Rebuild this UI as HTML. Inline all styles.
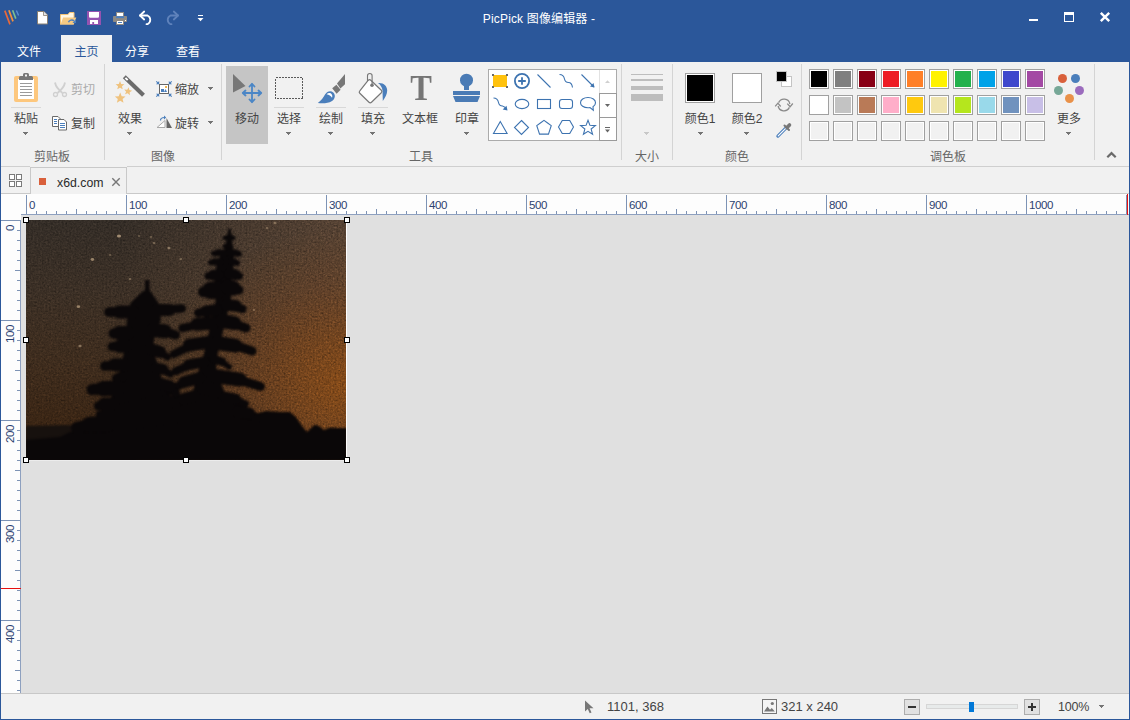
<!DOCTYPE html>
<html lang="zh-CN">
<head>
<meta charset="utf-8">
<title>PicPick 图像编辑器</title>
<style>
*{box-sizing:border-box;margin:0;padding:0}
html,body{width:1130px;height:720px;overflow:hidden;background:#e0e0e0}
body{font-family:"Liberation Sans","Noto Sans CJK SC",sans-serif;font-size:12px;color:#444;position:relative}
#app,#app *{position:absolute}
#app svg *{position:static}
#app{left:0;top:0;width:1130px;height:720px;overflow:hidden;background:#e0e0e0}
#titlebar{left:0;top:0;width:1130px;height:62px;background:#2b579a}
#title{left:439px;top:10px;letter-spacing:0.150px;width:200px;text-align:center;color:#fff;font-size:12px;line-height:18px;white-space:nowrap}
.tab{top:35px;height:27px;line-height:35px;color:#fff;font-size:12px;text-align:center;white-space:nowrap}
.tab.on{background:#f1f1f1;color:#2b579a}
#ribbon{left:1px;top:62px;width:1128px;height:105px;background:#f1f1f1;border-bottom:1px solid #d4d4d4}
.sep{top:64px;width:1px;height:96px;background:#d4d4d4}
.glabel{top:149px;height:16px;line-height:16px;font-size:12px;color:#666;text-align:center;white-space:nowrap}
.blabel{height:16px;line-height:16px;font-size:12px;color:#444;text-align:center;white-space:nowrap}
.blabel.dis{color:#aaa}
.arrow{width:5px;height:3px;background:linear-gradient(#747474,#747474) 0 0/5px 1px no-repeat,linear-gradient(#747474,#747474) 1px 1px/3px 1px no-repeat,linear-gradient(#747474,#747474) 2px 2px/1px 1px no-repeat}
.arrow.dis{background:linear-gradient(#c8c8c8,#c8c8c8) 0 0/5px 1px no-repeat,linear-gradient(#c8c8c8,#c8c8c8) 1px 1px/3px 1px no-repeat,linear-gradient(#c8c8c8,#c8c8c8) 2px 2px/1px 1px no-repeat}
.hline{height:1px;background:#d8d8d8}
#doctabs{left:1px;top:167px;width:1128px;height:27px;background:#f1f1f1}
#ruler-h{left:1px;top:194px;width:1128px;height:21px;background:#fdfdfd;border-bottom:1px solid #8ea0bf}
#ruler-v{left:1px;top:215px;width:20px;height:478px;background:#fdfdfd;border-right:1px solid #8ea0bf}
#status{left:1px;top:693px;width:1128px;height:26px;background:#f1f1f1;border-top:1px solid #c8c8c8}
.frame-l{left:0;top:0;width:1px;height:720px;background:#2b579a}
.frame-r{left:1129px;top:0;width:1px;height:720px;background:#2b579a}
.frame-b{left:0;top:719px;width:1130px;height:1px;background:#2b579a}
.sw{width:20px;height:20px;border:1px solid #a0a0a0;background:#f1f1f1}
.sw i{left:1px;top:1px;width:16px;height:16px;border:1px solid #fff;display:block}
.hd{width:6px;height:6px;background:#fff;border:1px solid #000}
.rl{letter-spacing:-0.400px;font-size:11.500px;color:#2c4270;line-height:12px;white-space:nowrap}
.rv{transform-origin:0 0;transform:rotate(-90deg) translate(-100%,0)}
.st{font-size:12px;color:#444;line-height:16px;white-space:nowrap}
</style>
</head>
<body>
<div id="app">
  <div id="titlebar">
    <svg style="left:0;top:0" width="230" height="35" viewBox="0 0 230 35">
      <!-- logo -->
      <g stroke-linecap="butt" fill="none">
        <line x1="4.8" y1="10.6" x2="10" y2="24.4" stroke="#e8693a" stroke-width="1.7"/>
        <line x1="8.9" y1="10.2" x2="13" y2="21.4" stroke="#f4913a" stroke-width="1.7"/>
        <line x1="12.6" y1="10.2" x2="15.8" y2="18.6" stroke="#7fc08e" stroke-width="1.6"/>
        <line x1="16.4" y1="10.4" x2="18.6" y2="15.6" stroke="#5a8fd0" stroke-width="1.4"/>
      </g>
      <!-- new -->
      <path d="M37.5 11.5h6.5l3.5 3.5v9h-10z" fill="#fff" stroke="#8a8073" stroke-width="1"/>
      <path d="M43.5 11.5v4h4" fill="#e6e6e6" stroke="#8a8073" stroke-width="0.8"/>
      <!-- open -->
      <path d="M60.500 24.500v-10h7.500l1.500-2h4.500v5" fill="#fff6e2" stroke="#f3c376" stroke-width="1"/>
      <path d="M60.500 24.800l2.600-7.300h13.200l-2.600 7.300z" fill="#f5c983"/>
      <path d="M68.500 22.300c0.800-2.300 3.600-3 5.600-1.500" fill="none" stroke="#4a7fc0" stroke-width="1.500"/>
      <path d="M76 19.200v3.800h-3.600z" fill="#4a7fc0"/>
      <!-- save -->
      <rect x="87" y="11" width="14" height="14" fill="#9553b0"/>
      <path d="M89 12h10v4.500a1.200 1.200 0 0 1-1.200 1.200h-7.600a1.200 1.200 0 0 1-1.200-1.200z" fill="#fff"/>
      <rect x="90" y="20" width="8" height="4" fill="#fff"/>
      <rect x="92.300" y="22" width="1.800" height="2" fill="#9553b0"/>
      <!-- print -->
      <rect x="113" y="16" width="14" height="6" rx="0.800" fill="#8e8a84"/>
      <rect x="116.500" y="12.500" width="7" height="4" fill="#fff" stroke="#8e8a84" stroke-width="1"/>
      <rect x="116" y="16.300" width="8" height="1.800" fill="#4a7fc0"/>
      <rect x="116.500" y="20.500" width="7" height="4" fill="#fff" stroke="#8e8a84" stroke-width="1"/>
      <rect x="118" y="22" width="4" height="1" fill="#4a7fc0"/>
      <rect x="125" y="20" width="1" height="1" fill="#fff"/>
      <!-- undo -->
      <path d="M140 15.500h7.500a4.800 4.800 0 0 1 0 8.700h-1" fill="none" stroke="#fff" stroke-width="1.800" stroke-linecap="round"/>
      <path d="M144.200 11.500l-4.200 4 4.200 4" fill="none" stroke="#fff" stroke-width="1.800" stroke-linecap="round" stroke-linejoin="round"/>
      <!-- redo -->
      <path d="M178 15.500h-7.500a4.800 4.800 0 0 0 0 8.700h1" fill="none" stroke="#5f82bb" stroke-width="1.800" stroke-linecap="round"/>
      <path d="M173.800 11.500l4.200 4-4.200 4" fill="none" stroke="#5f82bb" stroke-width="1.800" stroke-linecap="round" stroke-linejoin="round"/>
      <!-- dropdown -->
      <rect x="198" y="15" width="5" height="1" fill="#fff"/>
      <path d="M197.500 18h6l-3 3.200z" fill="#fff"/>
    </svg>
    <div id="title">PicPick 图像编辑器 -</div>
    <svg style="left:1020px;top:5px" width="100" height="24" viewBox="1020 5 100 24">
      <rect x="1029" y="19" width="9" height="2" fill="#fff"/>
      <rect x="1064.500" y="12.500" width="9" height="9" fill="none" stroke="#fff" stroke-width="1"/>
      <rect x="1064" y="12" width="10" height="3" fill="#fff"/>
      <path d="M1100.800 12.800l8.400 8.400M1109.200 12.800l-8.400 8.400" stroke="#fff" stroke-width="2.400" fill="none"/>
    </svg>
    <div class="tab" style="left:1px;width:56px">文件</div>
    <div class="tab on" style="left:61px;width:51px">主页</div>
    <div class="tab" style="left:112px;width:50px">分享</div>
    <div class="tab" style="left:163px;width:50px">查看</div>
  </div>
  <div id="ribbon"></div>
  <div id="rb">
    <div class="sep" style="left:104px"></div>
    <div class="sep" style="left:221px"></div>
    <div class="sep" style="left:621px"></div>
    <div class="sep" style="left:672px"></div>
    <div class="sep" style="left:801px"></div>
    <div class="sep" style="left:1094px"></div>
    <div style="left:226px;top:66px;width:42px;height:78px;background:#c5c5c5"></div>
    <div class="hline" style="left:11px;top:107px;width:30px"></div>
    <div class="hline" style="left:274px;top:107px;width:30px"></div>
    <div class="hline" style="left:316px;top:107px;width:30px"></div>
    <div class="hline" style="left:358px;top:107px;width:30px"></div>
    <div class="blabel" style="left:6px;top:111px;width:40px">粘贴</div>
    <div class="blabel dis" style="left:71px;top:82px;width:24px">剪切</div>
    <div class="blabel" style="left:71px;top:116px;width:24px">复制</div>
    <div class="blabel" style="left:110px;top:111px;width:40px">效果</div>
    <div class="blabel" style="left:175px;top:82px;width:24px">缩放</div>
    <div class="blabel" style="left:175px;top:116px;width:24px">旋转</div>
    <div class="blabel" style="left:227px;top:111px;width:40px">移动</div>
    <div class="blabel" style="left:269px;top:111px;width:40px">选择</div>
    <div class="blabel" style="left:311px;top:111px;width:40px">绘制</div>
    <div class="blabel" style="left:353px;top:111px;width:40px">填充</div>
    <div class="blabel" style="left:395px;top:111px;width:50px">文本框</div>
    <div class="blabel" style="left:447px;top:111px;width:40px">印章</div>
    <div class="blabel" style="left:680px;top:111px;width:40px">颜色1</div>
    <div class="blabel" style="left:727px;top:111px;width:40px">颜色2</div>
    <div class="blabel" style="left:1049px;top:111px;width:40px">更多</div>
    <div class="glabel" style="left:22px;width:60px">剪贴板</div>
    <div class="glabel" style="left:133px;width:60px">图像</div>
    <div class="glabel" style="left:391px;width:60px">工具</div>
    <div class="glabel" style="left:617px;width:60px">大小</div>
    <div class="glabel" style="left:707px;width:60px">颜色</div>
    <div class="glabel" style="left:918px;width:60px">调色板</div>
    <div class="arrow" style="left:23px;top:132px"></div>
    <div class="arrow" style="left:127px;top:132px"></div>
    <div class="arrow" style="left:208px;top:87px"></div>
    <div class="arrow" style="left:208px;top:121px"></div>
    <div class="arrow" style="left:286px;top:132px"></div>
    <div class="arrow" style="left:328px;top:132px"></div>
    <div class="arrow" style="left:370px;top:132px"></div>
    <div class="arrow" style="left:464px;top:132px"></div>
    <div class="arrow dis" style="left:644px;top:132px"></div>
    <div class="arrow" style="left:698px;top:132px"></div>
    <div class="arrow" style="left:744px;top:132px"></div>
    <div class="arrow" style="left:1066px;top:132px"></div>
    <div style="left:409px;top:68px;width:24px;height:40px;line-height:40px;font-family:'Liberation Serif',serif;font-size:36px;font-weight:bold;color:#767676;text-align:center;transform:scaleX(0.900);transform-origin:50% 50%">T</div>
  </div>
  <svg id="ico" style="left:0;top:62px" width="1130" height="104" viewBox="0 62 1130 104">
<g>
<rect x="14" y="76" width="24" height="26" rx="2" fill="#fdc77d"/>
<rect x="18" y="79" width="16" height="20" fill="#fff"/>
<path d="M19 80v-2.500a1.500 1.500 0 0 1 1.500-1.500h2.500v-1.500a1.500 1.500 0 0 1 1.500-1.500h3a1.500 1.500 0 0 1 1.500 1.500v1.500h2.500a1.500 1.500 0 0 1 1.500 1.500v2.500z" fill="#777"/>
<rect x="25" y="74.500" width="2" height="2" fill="#f4f4f4"/>
<g fill="#9a9a9a"><rect x="20" y="83" width="12" height="1"/><rect x="20" y="86" width="12" height="1"/><rect x="20" y="89" width="12" height="1"/><rect x="20" y="92" width="12" height="1"/><rect x="20" y="95" width="12" height="1"/></g>
</g>
<g fill="none" stroke="#d0d0d0" stroke-width="1.300">
<path d="M55 82.500c0.500 3 2.500 6.500 7.500 10.500M65 82.500c-0.500 3-2.500 6.500-7.500 10.500" stroke-width="1.800"/>
<circle cx="55.500" cy="94.500" r="2"/><circle cx="64.500" cy="94.500" r="2"/>
</g>
<g>
<path d="M52.500 116.500h5.500l2.500 2.500v7.500h-8z" fill="#fff" stroke="#6a6a6a"/>
<path d="M58.500 119.500h5.500l2.500 2.500v8h-8z" fill="#fff" stroke="#6a6a6a"/>
<g fill="#4a7ebb"><rect x="54" y="119" width="3" height="1"/><rect x="54" y="121" width="3" height="1"/><rect x="54" y="123" width="3" height="1"/>
<rect x="60" y="123" width="5" height="1"/><rect x="60" y="125" width="5" height="1"/><rect x="60" y="127" width="5" height="1"/></g>
</g>
<g>
<path d="M124.300 76.800l19.200 18.400" stroke="#6b6b6b" stroke-width="4.200" fill="none"/>
<path d="M125.400 77.900l2.300 2.200" stroke="#fff" stroke-width="2" fill="none"/>
<polygon points="120.00,81.00 121.22,83.93 124.37,84.18 121.97,86.24 122.70,89.32 120.00,87.67 117.30,89.32 118.03,86.24 115.63,84.18 118.78,83.93" fill="#efc27e"/>
<polygon points="128.73,87.26 129.36,90.09 132.16,90.82 129.67,92.29 129.84,95.17 127.67,93.26 124.98,94.32 126.13,91.66 124.29,89.43 127.17,89.70" fill="#efc27e"/>
<polygon points="120.20,92.60 121.68,96.16 125.53,96.47 122.60,98.98 123.49,102.73 120.20,100.72 116.91,102.73 117.80,98.98 114.87,96.47 118.72,96.16" fill="#efc27e"/>
</g>
<g>
<rect x="159.500" y="84.500" width="9" height="9" fill="#fff" stroke="#666"/>
<rect x="161" y="89" width="3" height="3" fill="#4a7ebb"/><path d="M164 92l1.500-3 1.500 3z" fill="#4a7ebb"/><rect x="165" y="86" width="2" height="2" fill="#f0b44e"/>
<g stroke="#4a7ebb" stroke-width="1.100" fill="none">
<path d="M156.300 81.300l2.400 2.400M171.700 81.300l-2.400 2.400M156.300 96.700l2.400-2.400M171.700 96.700l-2.400-2.400"/>
</g>
<g fill="#4a7ebb"><path d="M159.200 81v3.200h-3.200z"/><path d="M168.800 81v3.200h3.200z"/><path d="M159.200 97v-3.200h-3.200z"/><path d="M168.800 97v-3.200h3.200z"/></g>
</g>
<g>
<path d="M157 127.500h8v-7z" fill="#fff" stroke="#aaa" stroke-width="1"/>
<path d="M166.500 128v-10l5.500 10z" fill="#666"/>
<path d="M160.500 120.500c0-2 1.500-3 4-3" fill="none" stroke="#4a7ebb" stroke-width="1.200"/>
<path d="M164 115.500l2.200 2-2.200 2z" fill="#4a7ebb"/>
</g>
<g>
<path d="M233 74v18.500l12.500-6.500z" fill="#777"/>
<g fill="none" stroke="#4b86c6" stroke-width="1.800" stroke-linecap="round" stroke-linejoin="round">
<path d="M252 84.500v17M243.500 93h17"/>
<path d="M249.500 86.500l2.500-2.700 2.500 2.700M249.500 99.500l2.500 2.700 2.500-2.700M245.500 90.500l-2.700 2.500 2.700 2.500M258.500 90.500l2.700 2.500-2.700 2.500"/>
</g>
</g>
<rect x="275.500" y="77.500" width="27" height="21" fill="none" stroke="#5a5a5a" stroke-width="1" stroke-dasharray="2 1" shape-rendering="crispEdges"/>
<g>
<path d="M345 74l-8 9.600 3.400 5 4.600-4.400z" fill="#777"/>
<path d="M336.400 84.800l-4.200 3.500 4.400 5.400 4-4z" fill="#777"/>
<path d="M317.800 103c3.500-2.300 5.500-5.500 7.200-8.500 2-3.400 5.800-4.400 8.300-2 2.600 2.500 1.800 6.700-1.700 8.800-3.200 1.900-8.600 2.400-13.800 1.700z" fill="#4a7ebb"/>
<path d="M326.600 94.300c1.600-1.600 4-1.600 5.200 0.200 0.600 1 0.700 2.200 0.200 3.300-1-1.800-3-3-5.400-3.500z" fill="#fff"/>
</g>
<g>
<path d="M378 83c5.500-0.600 9.300 3 9.200 7.600-0.100 3.600-1.800 7-4.400 10.400l-0.300-10.500c-0.300-3-1.800-5.500-4.500-7.500z" fill="#4a7ebb"/>
<path d="M368.300 80.200a1.800 1.800 0 0 1 2.500 0l10.500 10a1.800 1.800 0 0 1 0 2.500l-9.800 9.500a1.800 1.800 0 0 1-2.500 0l-9.200-8.900a1.800 1.800 0 0 1 0-2.500z" fill="#fff" stroke="#777" stroke-width="1.200" stroke-linejoin="round"/>
<path d="M367.500 81v-5.200a2.300 2.300 0 0 1 4.600 0v9" fill="none" stroke="#777" stroke-width="1.100"/>
<circle cx="372" cy="85.200" r="1.800" fill="#777"/>
</g>
<g fill="#4a7bb5">
<circle cx="466.500" cy="80.200" r="6.500"/>
<rect x="464" y="84" width="5" height="6"/>
<rect x="453" y="91" width="27" height="4"/>
<path d="M453 96h27l-2.500 6h-22z"/>
</g>
<g>
<rect x="488.500" y="69.500" width="128" height="71" fill="#fff" stroke="#ababab"/>
<rect x="599.500" y="93.500" width="17" height="24" fill="#fff" stroke="#9a9a9a"/>
<rect x="599.500" y="117.500" width="17" height="23" fill="#fff" stroke="#9a9a9a"/>
<rect x="599" y="70" width="1" height="23" fill="#e2e2e2"/>
<path d="M605 83h5l-2.500-2.800z" fill="#d0d0d0"/>
<path d="M605 104h5l-2.500 3z" fill="#666"/>
<rect x="605" y="127" width="5" height="1" fill="#666"/><path d="M605 129.500h5l-2.500 3z" fill="#666"/>
<rect x="493" y="75" width="14" height="12" fill="#ffc20e"/>
<g fill="#6a6a6a"><rect x="492" y="74" width="2" height="2"/><rect x="506" y="74" width="2" height="2"/><rect x="492" y="86" width="2" height="2"/><rect x="506" y="86" width="2" height="2"/></g>
<g fill="none" stroke="#3d73b0" stroke-width="1.100">
<circle cx="522" cy="81" r="7.100" stroke-width="1.800"/>
<path d="M518.200 81h7.600M522 77.200v7.600" stroke-width="1.800"/>
<path d="M537.500 74.500l13 13"/>
<path d="M559.500 74.500c3.500 0 4.500 2 5 4.500 0.500 2.500 2 3.500 4 3.500 2 0 3.500 1.500 4 5"/>
<path d="M581.500 74.500l12.500 12.500"/>
<path d="M493.500 98c3.500 0 4.500 2 5 4.500 0.500 2.500 2 3.500 4 3.500 1.500 0.300 3 1.500 4 3.500"/>
<ellipse cx="522" cy="104" rx="6.800" ry="4.600"/>
<rect x="537.500" y="99.500" width="13" height="9"/>
<rect x="559.500" y="99.500" width="13" height="9" rx="2.500"/>
<path d="M588 97.500c4.300 0 7.500 2.300 7.500 5.200 0 1.600-0.900 3-2.500 4l0.300 3.500-3.300-2.600c-0.600 0.100-1.300 0.200-2 0.200-4.300 0-7.500-2.300-7.500-5.100 0-2.900 3.200-5.200 7.500-5.200z"/>
<path d="M500.300 121.500l-6.800 12h13.600z" stroke-linejoin="miter"/>
<path d="M521.500 120.500l7 7-7 7-7-7z"/>
<polygon points="544.00,120.40 547.61,123.02 551.23,125.65 549.85,129.90 548.47,134.15 544.00,134.15 539.53,134.15 538.15,129.90 536.77,125.65 540.39,123.02"/>
<polygon points="573.50,127.00 571.62,130.25 569.75,133.50 566.00,133.50 562.25,133.50 560.38,130.25 558.50,127.00 560.38,123.75 562.25,120.50 566.00,120.50 569.75,120.50 571.62,123.75"/>
<polygon points="588.00,120.20 589.94,125.33 595.42,125.59 591.14,129.02 592.58,134.31 588.00,131.30 583.42,134.31 584.86,129.02 580.58,125.59 586.06,125.33"/>
</g>
<path d="M594.500 87.500l-1-4.500-3.500 3.500z" fill="#3d73b0"/>
<path d="M507.500 110.500l-1-4.800-3.800 3.800z" fill="#3d73b0"/>
</g>
<g fill="#bdbdbd"><rect x="631" y="74" width="32" height="1"/><rect x="631" y="79" width="32" height="2"/><rect x="631" y="86" width="32" height="4"/><rect x="631" y="94" width="32" height="7"/></g>
<g>
<rect x="685.500" y="73.500" width="29" height="29" fill="#fff" stroke="#a0a0a0"/><rect x="687" y="75" width="26" height="26" fill="#000"/>
<rect x="732.500" y="73.500" width="29" height="29" fill="#fff" stroke="#a0a0a0"/>
</g>
<g>
<rect x="781.500" y="76.500" width="10" height="10" fill="#fff" stroke="#c4c4c4"/>
<rect x="776.500" y="71.500" width="10" height="10" fill="#000" stroke="#c4c4c4"/>
<g fill="none" stroke="#8a8a8a" stroke-width="1.300">
<path d="M778.600 102.600a6 6 0 0 1 11.300 1.400"/>
<path d="M789.400 107.400a6 6 0 0 1 -11.300-1.400"/>
</g>
<path d="M787.300 103.600l2.800 3.200 2.700-3.300M775.200 106.400l2.700-3.200 2.800 3.300" fill="none" stroke="#8a8a8a" stroke-width="1.300"/>
<path d="M777.900 136.100l8.400-8.400" stroke="#4a7ebb" stroke-width="3.200" fill="none" stroke-linecap="round"/>
<path d="M778.200 135.800l8-8" stroke="#fff" stroke-width="1.200" fill="none" stroke-linecap="round"/>
<path d="M784.500 125.500l4.500 4.500" stroke="#777" stroke-width="2" fill="none" stroke-linecap="round"/>
<path d="M787 127.500l2.500-2.500" stroke="#777" stroke-width="3.600" fill="none" stroke-linecap="round"/>
</g>
<g shape-rendering="crispEdges"><rect x="809.5" y="69.5" width="19" height="19" fill="#fff" stroke="#a0a0a0"/><rect x="811" y="71" width="16" height="16" fill="#000000"/><rect x="833.5" y="69.5" width="19" height="19" fill="#fff" stroke="#a0a0a0"/><rect x="835" y="71" width="16" height="16" fill="#7f7f7f"/><rect x="857.5" y="69.5" width="19" height="19" fill="#fff" stroke="#a0a0a0"/><rect x="859" y="71" width="16" height="16" fill="#880015"/><rect x="881.5" y="69.5" width="19" height="19" fill="#fff" stroke="#a0a0a0"/><rect x="883" y="71" width="16" height="16" fill="#ed1c24"/><rect x="905.5" y="69.5" width="19" height="19" fill="#fff" stroke="#a0a0a0"/><rect x="907" y="71" width="16" height="16" fill="#ff7f27"/><rect x="929.5" y="69.5" width="19" height="19" fill="#fff" stroke="#a0a0a0"/><rect x="931" y="71" width="16" height="16" fill="#fff200"/><rect x="953.5" y="69.5" width="19" height="19" fill="#fff" stroke="#a0a0a0"/><rect x="955" y="71" width="16" height="16" fill="#22b14c"/><rect x="977.5" y="69.5" width="19" height="19" fill="#fff" stroke="#a0a0a0"/><rect x="979" y="71" width="16" height="16" fill="#00a2e8"/><rect x="1001.5" y="69.5" width="19" height="19" fill="#fff" stroke="#a0a0a0"/><rect x="1003" y="71" width="16" height="16" fill="#3f48cc"/><rect x="1025.5" y="69.5" width="19" height="19" fill="#fff" stroke="#a0a0a0"/><rect x="1027" y="71" width="16" height="16" fill="#a349a4"/><rect x="809.5" y="95.5" width="19" height="19" fill="#fff" stroke="#a0a0a0"/><rect x="811" y="97" width="16" height="16" fill="#ffffff"/><rect x="833.5" y="95.5" width="19" height="19" fill="#fff" stroke="#a0a0a0"/><rect x="835" y="97" width="16" height="16" fill="#c3c3c3"/><rect x="857.5" y="95.5" width="19" height="19" fill="#fff" stroke="#a0a0a0"/><rect x="859" y="97" width="16" height="16" fill="#b97a57"/><rect x="881.5" y="95.5" width="19" height="19" fill="#fff" stroke="#a0a0a0"/><rect x="883" y="97" width="16" height="16" fill="#ffaec9"/><rect x="905.5" y="95.5" width="19" height="19" fill="#fff" stroke="#a0a0a0"/><rect x="907" y="97" width="16" height="16" fill="#ffc90e"/><rect x="929.5" y="95.5" width="19" height="19" fill="#fff" stroke="#a0a0a0"/><rect x="931" y="97" width="16" height="16" fill="#efe4b0"/><rect x="953.5" y="95.5" width="19" height="19" fill="#fff" stroke="#a0a0a0"/><rect x="955" y="97" width="16" height="16" fill="#b5e61d"/><rect x="977.5" y="95.5" width="19" height="19" fill="#fff" stroke="#a0a0a0"/><rect x="979" y="97" width="16" height="16" fill="#99d9ea"/><rect x="1001.5" y="95.5" width="19" height="19" fill="#fff" stroke="#a0a0a0"/><rect x="1003" y="97" width="16" height="16" fill="#7092be"/><rect x="1025.5" y="95.5" width="19" height="19" fill="#fff" stroke="#a0a0a0"/><rect x="1027" y="97" width="16" height="16" fill="#c8bfe7"/><rect x="809.5" y="121.5" width="19" height="19" fill="#fff" stroke="#a0a0a0"/><rect x="811" y="123" width="16" height="16" fill="#f1f1f1"/><rect x="833.5" y="121.5" width="19" height="19" fill="#fff" stroke="#a0a0a0"/><rect x="835" y="123" width="16" height="16" fill="#f1f1f1"/><rect x="857.5" y="121.5" width="19" height="19" fill="#fff" stroke="#a0a0a0"/><rect x="859" y="123" width="16" height="16" fill="#f1f1f1"/><rect x="881.5" y="121.5" width="19" height="19" fill="#fff" stroke="#a0a0a0"/><rect x="883" y="123" width="16" height="16" fill="#f1f1f1"/><rect x="905.5" y="121.5" width="19" height="19" fill="#fff" stroke="#a0a0a0"/><rect x="907" y="123" width="16" height="16" fill="#f1f1f1"/><rect x="929.5" y="121.5" width="19" height="19" fill="#fff" stroke="#a0a0a0"/><rect x="931" y="123" width="16" height="16" fill="#f1f1f1"/><rect x="953.5" y="121.5" width="19" height="19" fill="#fff" stroke="#a0a0a0"/><rect x="955" y="123" width="16" height="16" fill="#f1f1f1"/><rect x="977.5" y="121.5" width="19" height="19" fill="#fff" stroke="#a0a0a0"/><rect x="979" y="123" width="16" height="16" fill="#f1f1f1"/><rect x="1001.5" y="121.5" width="19" height="19" fill="#fff" stroke="#a0a0a0"/><rect x="1003" y="123" width="16" height="16" fill="#f1f1f1"/><rect x="1025.5" y="121.5" width="19" height="19" fill="#fff" stroke="#a0a0a0"/><rect x="1027" y="123" width="16" height="16" fill="#f1f1f1"/></g>
<g>
<circle cx="1062.500" cy="78.500" r="4.500" fill="#d9603b"/>
<circle cx="1075.500" cy="78.500" r="4.500" fill="#4a7ebb"/>
<circle cx="1058.500" cy="90.500" r="4.500" fill="#76a797"/>
<circle cx="1079.500" cy="90.500" r="4.500" fill="#9b6bbd"/>
<circle cx="1069.500" cy="98.500" r="4.500" fill="#e99149"/>
</g>
<path d="M1107.300 157.300l4.200-4.200 4.200 4.200" fill="none" stroke="#6a6a6a" stroke-width="2.200"/>
  </svg>
  <div id="doctabs"></div>
  <div style="left:1px;top:166px;width:1128px;height:1px;background:#cfcfcf"></div>
  <div style="left:1px;top:193px;width:30px;height:1px;background:#c9c9c9"></div>
  <div style="left:126px;top:193px;width:1003px;height:1px;background:#c9c9c9"></div>
  <div style="left:30px;top:167px;width:1px;height:27px;background:#c9c9c9"></div>
  <div style="left:30px;top:166px;width:97px;height:1px;background:#f1f1f1"></div>
  <div style="left:30px;top:167px;width:97px;height:1px;background:#c9c9c9"></div>
  <div style="left:126px;top:167px;width:1px;height:27px;background:#c9c9c9"></div>
  <svg style="left:9px;top:174px" width="13" height="13" viewBox="0 0 13 13" shape-rendering="crispEdges">
    <g fill="#fff" stroke="#7a7a7a" stroke-width="1"><rect x="0.500" y="0.500" width="5" height="5"/><rect x="7.500" y="0.500" width="5" height="5"/><rect x="0.500" y="7.500" width="5" height="5"/><rect x="7.500" y="7.500" width="5" height="5"/></g>
  </svg>
  <div style="left:39px;top:178px;width:7px;height:7px;background:#d9603b"></div>
  <div style="left:57px;top:175px;font-size:12.300px;line-height:16px;color:#2a2a2a;white-space:nowrap">x6d.com</div>
  <svg style="left:111px;top:177px" width="10" height="10" viewBox="0 0 10 10"><path d="M1.300 1.300l7.400 7.400M8.700 1.300l-7.400 7.400" stroke="#777" stroke-width="1.400" fill="none"/></svg>
  <div id="ruler-h"></div>
  <div id="ruler-v"></div>
  <div style="left:1px;top:194px;width:20px;height:26px;background:#fdfdfd"></div>
  <svg style="left:0;top:194px" width="1130" height="21" viewBox="0 194 1130 21" shape-rendering="crispEdges"><rect x="26" y="195" width="1" height="19" fill="#7d93b5"/><rect x="36" y="211" width="1" height="3" fill="#7d93b5"/><rect x="46" y="211" width="1" height="3" fill="#7d93b5"/><rect x="56" y="211" width="1" height="3" fill="#7d93b5"/><rect x="66" y="211" width="1" height="3" fill="#7d93b5"/><rect x="76" y="209" width="1" height="5" fill="#7d93b5"/><rect x="86" y="211" width="1" height="3" fill="#7d93b5"/><rect x="96" y="211" width="1" height="3" fill="#7d93b5"/><rect x="106" y="211" width="1" height="3" fill="#7d93b5"/><rect x="116" y="211" width="1" height="3" fill="#7d93b5"/><rect x="126" y="195" width="1" height="19" fill="#7d93b5"/><rect x="136" y="211" width="1" height="3" fill="#7d93b5"/><rect x="146" y="211" width="1" height="3" fill="#7d93b5"/><rect x="156" y="211" width="1" height="3" fill="#7d93b5"/><rect x="166" y="211" width="1" height="3" fill="#7d93b5"/><rect x="176" y="209" width="1" height="5" fill="#7d93b5"/><rect x="186" y="211" width="1" height="3" fill="#7d93b5"/><rect x="196" y="211" width="1" height="3" fill="#7d93b5"/><rect x="206" y="211" width="1" height="3" fill="#7d93b5"/><rect x="216" y="211" width="1" height="3" fill="#7d93b5"/><rect x="226" y="195" width="1" height="19" fill="#7d93b5"/><rect x="236" y="211" width="1" height="3" fill="#7d93b5"/><rect x="246" y="211" width="1" height="3" fill="#7d93b5"/><rect x="256" y="211" width="1" height="3" fill="#7d93b5"/><rect x="266" y="211" width="1" height="3" fill="#7d93b5"/><rect x="276" y="209" width="1" height="5" fill="#7d93b5"/><rect x="286" y="211" width="1" height="3" fill="#7d93b5"/><rect x="296" y="211" width="1" height="3" fill="#7d93b5"/><rect x="306" y="211" width="1" height="3" fill="#7d93b5"/><rect x="316" y="211" width="1" height="3" fill="#7d93b5"/><rect x="326" y="195" width="1" height="19" fill="#7d93b5"/><rect x="336" y="211" width="1" height="3" fill="#7d93b5"/><rect x="346" y="211" width="1" height="3" fill="#7d93b5"/><rect x="356" y="211" width="1" height="3" fill="#7d93b5"/><rect x="366" y="211" width="1" height="3" fill="#7d93b5"/><rect x="376" y="209" width="1" height="5" fill="#7d93b5"/><rect x="386" y="211" width="1" height="3" fill="#7d93b5"/><rect x="396" y="211" width="1" height="3" fill="#7d93b5"/><rect x="406" y="211" width="1" height="3" fill="#7d93b5"/><rect x="416" y="211" width="1" height="3" fill="#7d93b5"/><rect x="426" y="195" width="1" height="19" fill="#7d93b5"/><rect x="436" y="211" width="1" height="3" fill="#7d93b5"/><rect x="446" y="211" width="1" height="3" fill="#7d93b5"/><rect x="456" y="211" width="1" height="3" fill="#7d93b5"/><rect x="466" y="211" width="1" height="3" fill="#7d93b5"/><rect x="476" y="209" width="1" height="5" fill="#7d93b5"/><rect x="486" y="211" width="1" height="3" fill="#7d93b5"/><rect x="496" y="211" width="1" height="3" fill="#7d93b5"/><rect x="506" y="211" width="1" height="3" fill="#7d93b5"/><rect x="516" y="211" width="1" height="3" fill="#7d93b5"/><rect x="526" y="195" width="1" height="19" fill="#7d93b5"/><rect x="536" y="211" width="1" height="3" fill="#7d93b5"/><rect x="546" y="211" width="1" height="3" fill="#7d93b5"/><rect x="556" y="211" width="1" height="3" fill="#7d93b5"/><rect x="566" y="211" width="1" height="3" fill="#7d93b5"/><rect x="576" y="209" width="1" height="5" fill="#7d93b5"/><rect x="586" y="211" width="1" height="3" fill="#7d93b5"/><rect x="596" y="211" width="1" height="3" fill="#7d93b5"/><rect x="606" y="211" width="1" height="3" fill="#7d93b5"/><rect x="616" y="211" width="1" height="3" fill="#7d93b5"/><rect x="626" y="195" width="1" height="19" fill="#7d93b5"/><rect x="636" y="211" width="1" height="3" fill="#7d93b5"/><rect x="646" y="211" width="1" height="3" fill="#7d93b5"/><rect x="656" y="211" width="1" height="3" fill="#7d93b5"/><rect x="666" y="211" width="1" height="3" fill="#7d93b5"/><rect x="676" y="209" width="1" height="5" fill="#7d93b5"/><rect x="686" y="211" width="1" height="3" fill="#7d93b5"/><rect x="696" y="211" width="1" height="3" fill="#7d93b5"/><rect x="706" y="211" width="1" height="3" fill="#7d93b5"/><rect x="716" y="211" width="1" height="3" fill="#7d93b5"/><rect x="726" y="195" width="1" height="19" fill="#7d93b5"/><rect x="736" y="211" width="1" height="3" fill="#7d93b5"/><rect x="746" y="211" width="1" height="3" fill="#7d93b5"/><rect x="756" y="211" width="1" height="3" fill="#7d93b5"/><rect x="766" y="211" width="1" height="3" fill="#7d93b5"/><rect x="776" y="209" width="1" height="5" fill="#7d93b5"/><rect x="786" y="211" width="1" height="3" fill="#7d93b5"/><rect x="796" y="211" width="1" height="3" fill="#7d93b5"/><rect x="806" y="211" width="1" height="3" fill="#7d93b5"/><rect x="816" y="211" width="1" height="3" fill="#7d93b5"/><rect x="826" y="195" width="1" height="19" fill="#7d93b5"/><rect x="836" y="211" width="1" height="3" fill="#7d93b5"/><rect x="846" y="211" width="1" height="3" fill="#7d93b5"/><rect x="856" y="211" width="1" height="3" fill="#7d93b5"/><rect x="866" y="211" width="1" height="3" fill="#7d93b5"/><rect x="876" y="209" width="1" height="5" fill="#7d93b5"/><rect x="886" y="211" width="1" height="3" fill="#7d93b5"/><rect x="896" y="211" width="1" height="3" fill="#7d93b5"/><rect x="906" y="211" width="1" height="3" fill="#7d93b5"/><rect x="916" y="211" width="1" height="3" fill="#7d93b5"/><rect x="926" y="195" width="1" height="19" fill="#7d93b5"/><rect x="936" y="211" width="1" height="3" fill="#7d93b5"/><rect x="946" y="211" width="1" height="3" fill="#7d93b5"/><rect x="956" y="211" width="1" height="3" fill="#7d93b5"/><rect x="966" y="211" width="1" height="3" fill="#7d93b5"/><rect x="976" y="209" width="1" height="5" fill="#7d93b5"/><rect x="986" y="211" width="1" height="3" fill="#7d93b5"/><rect x="996" y="211" width="1" height="3" fill="#7d93b5"/><rect x="1006" y="211" width="1" height="3" fill="#7d93b5"/><rect x="1016" y="211" width="1" height="3" fill="#7d93b5"/><rect x="1026" y="195" width="1" height="19" fill="#7d93b5"/><rect x="1036" y="211" width="1" height="3" fill="#7d93b5"/><rect x="1046" y="211" width="1" height="3" fill="#7d93b5"/><rect x="1056" y="211" width="1" height="3" fill="#7d93b5"/><rect x="1066" y="211" width="1" height="3" fill="#7d93b5"/><rect x="1076" y="209" width="1" height="5" fill="#7d93b5"/><rect x="1086" y="211" width="1" height="3" fill="#7d93b5"/><rect x="1096" y="211" width="1" height="3" fill="#7d93b5"/><rect x="1106" y="211" width="1" height="3" fill="#7d93b5"/><rect x="1116" y="211" width="1" height="3" fill="#7d93b5"/><rect x="1126" y="195" width="1" height="19" fill="#7d93b5"/><rect x="1127" y="194" width="1" height="21" fill="#e81010"/></svg>
  <svg style="left:0;top:215px" width="21" height="478" viewBox="0 215 21 478" shape-rendering="crispEdges"><rect x="1" y="220" width="19" height="1" fill="#7d93b5"/><rect x="17" y="230" width="3" height="1" fill="#7d93b5"/><rect x="17" y="240" width="3" height="1" fill="#7d93b5"/><rect x="17" y="250" width="3" height="1" fill="#7d93b5"/><rect x="17" y="260" width="3" height="1" fill="#7d93b5"/><rect x="15" y="270" width="5" height="1" fill="#7d93b5"/><rect x="17" y="280" width="3" height="1" fill="#7d93b5"/><rect x="17" y="290" width="3" height="1" fill="#7d93b5"/><rect x="17" y="300" width="3" height="1" fill="#7d93b5"/><rect x="17" y="310" width="3" height="1" fill="#7d93b5"/><rect x="1" y="320" width="19" height="1" fill="#7d93b5"/><rect x="17" y="330" width="3" height="1" fill="#7d93b5"/><rect x="17" y="340" width="3" height="1" fill="#7d93b5"/><rect x="17" y="350" width="3" height="1" fill="#7d93b5"/><rect x="17" y="360" width="3" height="1" fill="#7d93b5"/><rect x="15" y="370" width="5" height="1" fill="#7d93b5"/><rect x="17" y="380" width="3" height="1" fill="#7d93b5"/><rect x="17" y="390" width="3" height="1" fill="#7d93b5"/><rect x="17" y="400" width="3" height="1" fill="#7d93b5"/><rect x="17" y="410" width="3" height="1" fill="#7d93b5"/><rect x="1" y="420" width="19" height="1" fill="#7d93b5"/><rect x="17" y="430" width="3" height="1" fill="#7d93b5"/><rect x="17" y="440" width="3" height="1" fill="#7d93b5"/><rect x="17" y="450" width="3" height="1" fill="#7d93b5"/><rect x="17" y="460" width="3" height="1" fill="#7d93b5"/><rect x="15" y="470" width="5" height="1" fill="#7d93b5"/><rect x="17" y="480" width="3" height="1" fill="#7d93b5"/><rect x="17" y="490" width="3" height="1" fill="#7d93b5"/><rect x="17" y="500" width="3" height="1" fill="#7d93b5"/><rect x="17" y="510" width="3" height="1" fill="#7d93b5"/><rect x="1" y="520" width="19" height="1" fill="#7d93b5"/><rect x="17" y="530" width="3" height="1" fill="#7d93b5"/><rect x="17" y="540" width="3" height="1" fill="#7d93b5"/><rect x="17" y="550" width="3" height="1" fill="#7d93b5"/><rect x="17" y="560" width="3" height="1" fill="#7d93b5"/><rect x="15" y="570" width="5" height="1" fill="#7d93b5"/><rect x="17" y="580" width="3" height="1" fill="#7d93b5"/><rect x="17" y="590" width="3" height="1" fill="#7d93b5"/><rect x="17" y="600" width="3" height="1" fill="#7d93b5"/><rect x="17" y="610" width="3" height="1" fill="#7d93b5"/><rect x="1" y="620" width="19" height="1" fill="#7d93b5"/><rect x="17" y="630" width="3" height="1" fill="#7d93b5"/><rect x="17" y="640" width="3" height="1" fill="#7d93b5"/><rect x="17" y="650" width="3" height="1" fill="#7d93b5"/><rect x="17" y="660" width="3" height="1" fill="#7d93b5"/><rect x="15" y="670" width="5" height="1" fill="#7d93b5"/><rect x="17" y="680" width="3" height="1" fill="#7d93b5"/><rect x="17" y="690" width="3" height="1" fill="#7d93b5"/><rect x="1" y="588" width="20" height="1" fill="#e81010"/></svg>
  <div class="rl" style="left:29px;top:199px">0</div>
  <div class="rl" style="left:129px;top:199px">100</div>
  <div class="rl" style="left:229px;top:199px">200</div>
  <div class="rl" style="left:329px;top:199px">300</div>
  <div class="rl" style="left:429px;top:199px">400</div>
  <div class="rl" style="left:529px;top:199px">500</div>
  <div class="rl" style="left:629px;top:199px">600</div>
  <div class="rl" style="left:729px;top:199px">700</div>
  <div class="rl" style="left:829px;top:199px">800</div>
  <div class="rl" style="left:929px;top:199px">900</div>
  <div class="rl" style="left:1029px;top:199px">1000</div>
  <div class="rl rv" style="left:4px;top:225px">0</div>
  <div class="rl rv" style="left:4px;top:325px">100</div>
  <div class="rl rv" style="left:4px;top:425px">200</div>
  <div class="rl rv" style="left:4px;top:525px">300</div>
  <div class="rl rv" style="left:4px;top:625px">400</div>
  <svg id="pic" style="left:26px;top:220px" width="321" height="240" viewBox="0 0 321 240">
    <defs>
      <linearGradient id="sky" x1="0" y1="0" x2="0" y2="1">
        <stop offset="0" stop-color="#342d27"/><stop offset="0.300" stop-color="#3b2f25"/><stop offset="0.600" stop-color="#3e2c1d"/><stop offset="0.850" stop-color="#3a2514"/><stop offset="1" stop-color="#2a1a0e"/>
      </linearGradient>
      <linearGradient id="lite" x1="0" y1="0" x2="1" y2="0">
        <stop offset="0.300" stop-color="#785840" stop-opacity="0"/><stop offset="1" stop-color="#785840" stop-opacity="0.500"/>
      </linearGradient>
      <radialGradient id="glow" gradientUnits="userSpaceOnUse" cx="330" cy="165" r="200" gradientTransform="translate(330 165) scale(1 0.800) translate(-330 -165)">
        <stop offset="0" stop-color="#8a4c16" stop-opacity="0.950"/><stop offset="0.300" stop-color="#7e4618" stop-opacity="0.720"/><stop offset="0.650" stop-color="#723e18" stop-opacity="0.280"/><stop offset="1" stop-color="#6a3a14" stop-opacity="0"/>
      </radialGradient>
      <filter id="soft" x="-5%" y="-5%" width="110%" height="110%" color-interpolation-filters="sRGB"><feGaussianBlur stdDeviation="0.900"/></filter>
      <filter id="grain" x="0" y="0" width="100%" height="100%" color-interpolation-filters="sRGB"><feTurbulence type="fractalNoise" baseFrequency="0.550" numOctaves="2" seed="3" result="n"/><feColorMatrix in="n" type="matrix" values="0.600 0.600 0.600 0 -0.400  0.600 0.600 0.600 0 -0.400  0.600 0.600 0.600 0 -0.400  0 0 0 0 1"/></filter>
      <clipPath id="pc"><rect width="321" height="240"/></clipPath>
    </defs>
    <g clip-path="url(#pc)">
    <rect width="321" height="240" fill="url(#sky)"/>
    <rect width="321" height="240" fill="url(#lite)"/>
    <rect width="321" height="240" fill="url(#glow)"/>
    <rect width="321" height="240" filter="url(#grain)" style="mix-blend-mode:overlay" opacity="0.350"/>
    <ellipse cx="93.0" cy="16.0" rx="2.1" ry="1.6" fill="#e0c29c" opacity="0.64"/>
    <ellipse cx="66.4" cy="39.5" rx="1.8" ry="1.4" fill="#e0c29c" opacity="0.56"/>
    <ellipse cx="52.4" cy="86.7" rx="1.8" ry="1.4" fill="#e0c29c" opacity="0.56"/>
    <ellipse cx="54.0" cy="126.0" rx="1.7" ry="1.3" fill="#e0c29c" opacity="0.48"/>
    <ellipse cx="143.0" cy="28.0" rx="1.6" ry="1.2" fill="#e0c29c" opacity="0.48"/>
    <ellipse cx="128.0" cy="23.0" rx="1.4" ry="1.1" fill="#e0c29c" opacity="0.40"/>
    <ellipse cx="154.7" cy="39.0" rx="1.4" ry="1.1" fill="#e0c29c" opacity="0.40"/>
    <ellipse cx="104.0" cy="59.0" rx="1.4" ry="1.1" fill="#e0c29c" opacity="0.40"/>
    <ellipse cx="249.0" cy="3.0" rx="1.6" ry="1.2" fill="#e0c29c" opacity="0.40"/>
    <ellipse cx="241.0" cy="8.0" rx="1.4" ry="1.1" fill="#e0c29c" opacity="0.36"/>
    <ellipse cx="228.0" cy="90.0" rx="1.3" ry="1.0" fill="#e0c29c" opacity="0.32"/>
    <ellipse cx="125.0" cy="17.0" rx="1.3" ry="1.0" fill="#e0c29c" opacity="0.32"/>
    <ellipse cx="84.0" cy="35.0" rx="1.3" ry="1.0" fill="#e0c29c" opacity="0.28"/>
    <ellipse cx="113.0" cy="16.0" rx="1.3" ry="1.0" fill="#e0c29c" opacity="0.28"/>
    <path d="M0 206 L40 205 L70 207 L110 203 V240 H0Z" fill="#17110e" filter="url(#soft)"/>
    <g fill="#0a0708" filter="url(#soft)">
      <path d="M202.3 8.5 L201.3 16.0 L198.5 30.0 L193.0 38.0 L190.0 48.0 L188.5 61.0 L189.5 81.0 L186.0 98.0 L182.0 116.0 L177.0 137.0 L172.0 152.0 L166.0 175.0 L164.0 190.0 L159.0 220.0 L224.0 220.0 L214.0 190.0 L200.0 175.0 L190.0 152.0 L191.0 137.0 L196.0 116.0 L200.0 98.0 L205.0 81.0 L205.0 61.0 L207.5 48.0 L208.0 38.0 L207.0 30.0 L205.7 16.0 L204.7 8.5Z"/>
      <path d="M119.0 60.0 L119.0 70.0 L116.0 72.0 L110.5 77.0 L104.5 83.0 L104.0 86.0 L104.0 92.0 L101.0 100.0 L100.0 110.0 L96.0 120.0 L98.0 130.0 L96.0 145.0 L92.0 160.0 L84.0 180.0 L74.0 220.0 L164.0 220.0 L146.0 180.0 L136.0 160.0 L132.0 145.0 L127.0 130.0 L128.0 120.0 L130.0 110.0 L135.0 100.0 L134.0 92.0 L133.0 86.0 L132.5 83.0 L128.5 77.0 L125.0 72.0 L123.5 70.0 L123.5 60.0Z"/>
      <path d="M70.0 192.0 L94.0 184.0 L124.0 177.0 L149.0 175.0 L174.0 174.0 L209.0 182.0 L224.0 189.0 L232.0 194.0 L232.0 220.0 L70.0 220.0Z"/>
      <path d="M0.0 220.0 L34.0 217.0 L44.0 212.0 L74.0 213.0 L104.0 210.0 L144.0 204.0 L174.0 200.0 L214.0 200.0 L224.0 198.0 L232.0 193.0 L240.0 191.0 L254.0 192.0 L264.0 192.0 L270.0 197.0 L276.0 206.0 L281.0 212.0 L285.0 208.0 L289.0 204.5 L293.0 206.0 L298.0 210.0 L304.0 207.5 L312.0 208.0 L321.0 208.0 V241 H0 Z"/>
      <g fill="none" stroke="#0a0708" stroke-linecap="round">
        <path d="M203.9 18.0Q200.8 17.4 198.5 18.0" stroke-width="4.0"/>
        <path d="M203.9 18.0L201.2 17.5" stroke-width="4.7"/>
        <path d="M202.3 26.0Q200.5 25.9 198.5 26.5" stroke-width="4.0"/>
        <path d="M202.3 26.0L199.3 26.2" stroke-width="4.7"/>
        <path d="M199.4 33.0Q192.7 33.0 187.8 33.5" stroke-width="5.5"/>
        <path d="M199.4 33.0L192.2 32.7" stroke-width="6.9"/>
        <path d="M194.8 42.0Q189.6 42.6 184.8 42.5" stroke-width="5.5"/>
        <path d="M194.8 42.0L188.5 41.8" stroke-width="6.9"/>
        <path d="M192.2 55.0Q187.5 56.0 182.3 56.0" stroke-width="7.6"/>
        <path d="M192.2 55.0L186.9 55.2" stroke-width="10.7"/>
        <path d="M191.9 70.0Q185.5 69.8 177.1 72.0" stroke-width="10.3"/>
        <path d="M191.9 70.0L184.5 70.3" stroke-width="17.3"/>
        <path d="M190.6 90.0Q180.6 90.1 172.1 93.0" stroke-width="8.2"/>
        <path d="M190.6 90.0L180.0 91.3" stroke-width="11.8"/>
        <path d="M187.9 103.0Q171.6 104.4 156.6 108.0" stroke-width="8.2"/>
        <path d="M187.9 103.0L170.9 104.3" stroke-width="12.9"/>
        <path d="M183.6 122.0Q165.9 124.3 148.1 134.0" stroke-width="8.2"/>
        <path d="M183.6 122.0L163.2 125.2" stroke-width="12.9"/>
        <path d="M178.3 142.0Q164.6 144.1 150.1 151.0" stroke-width="8.2"/>
        <path d="M178.3 142.0L162.4 144.8" stroke-width="10.7"/>
        <path d="M173.4 158.0Q158.7 160.9 144.1 171.0" stroke-width="8.2"/>
        <path d="M173.4 158.0L157.9 162.1" stroke-width="11.8"/>
        <path d="M168.9 176.0Q158.2 178.1 148.6 184.0" stroke-width="9.2"/>
        <path d="M168.9 176.0L157.8 178.9" stroke-width="11.8"/>
        <path d="M202.9 18.0Q205.7 17.7 207.5 18.0" stroke-width="4.0"/>
        <path d="M202.9 18.0L206.4 17.5" stroke-width="4.7"/>
        <path d="M203.6 26.0Q204.4 26.5 205.5 26.5" stroke-width="4.0"/>
        <path d="M203.6 26.0L204.0 26.1" stroke-width="4.7"/>
        <path d="M204.3 32.5Q207.9 33.1 213.2 34.0" stroke-width="5.5"/>
        <path d="M204.3 32.5L209.8 33.0" stroke-width="6.9"/>
        <path d="M204.8 41.5Q208.8 41.6 211.2 43.0" stroke-width="5.5"/>
        <path d="M204.8 41.5L208.7 42.1" stroke-width="6.9"/>
        <path d="M203.4 53.5Q208.5 54.1 213.2 56.0" stroke-width="7.6"/>
        <path d="M203.4 53.5L209.5 54.8" stroke-width="10.7"/>
        <path d="M202.0 67.0Q207.4 68.0 212.9 70.0" stroke-width="9.2"/>
        <path d="M202.0 67.0L207.1 68.1" stroke-width="15.1"/>
        <path d="M200.8 85.0Q208.9 86.8 216.4 89.0" stroke-width="8.2"/>
        <path d="M200.8 85.0L210.0 85.9" stroke-width="11.8"/>
        <path d="M196.3 101.0Q207.9 103.0 219.9 108.0" stroke-width="9.2"/>
        <path d="M196.3 101.0L208.3 103.1" stroke-width="14.0"/>
        <path d="M191.3 123.0Q208.0 124.4 225.9 131.0" stroke-width="9.2"/>
        <path d="M191.3 123.0L209.5 125.7" stroke-width="14.0"/>
        <path d="M187.9 139.0Q194.8 140.6 203.2 147.0" stroke-width="5.5"/>
        <path d="M187.9 139.0L196.1 141.8" stroke-width="8.5"/>
        <path d="M188.7 156.0Q210.7 158.5 234.4 166.5" stroke-width="9.2"/>
        <path d="M188.7 156.0L214.0 159.6" stroke-width="14.0"/>
        <path d="M198.9 177.0Q209.8 179.3 219.4 184.0" stroke-width="7.1"/>
        <path d="M198.9 177.0L209.7 179.0" stroke-width="10.7"/>
        <path d="M211.7 192.0Q221.3 194.1 231.4 198.0" stroke-width="9.2"/>
        <path d="M211.7 192.0L223.4 193.4" stroke-width="11.8"/>
        <path d="M107.0 92.0Q94.3 91.6 82.9 92.0" stroke-width="9.7"/>
        <path d="M107.0 92.0L93.2 92.0" stroke-width="12.9"/>
        <path d="M101.8 113.0Q94.9 112.7 87.6 113.5" stroke-width="10.3"/>
        <path d="M101.8 113.0L93.0 113.1" stroke-width="14.0"/>
        <path d="M100.2 126.0Q92.9 126.2 86.1 126.5" stroke-width="9.2"/>
        <path d="M100.2 126.0L93.4 126.4" stroke-width="12.9"/>
        <path d="M99.0 145.0Q89.0 145.4 78.9 146.0" stroke-width="9.7"/>
        <path d="M99.0 145.0L88.3 144.8" stroke-width="12.9"/>
        <path d="M95.8 157.0Q93.5 157.7 89.5 158.0" stroke-width="7.1"/>
        <path d="M95.8 157.0L93.1 157.7" stroke-width="10.7"/>
        <path d="M91.8 168.0Q78.8 168.2 66.2 169.5" stroke-width="11.3"/>
        <path d="M91.8 168.0L76.9 168.6" stroke-width="15.1"/>
        <path d="M86.0 184.0Q78.4 183.8 72.6 186.0" stroke-width="9.2"/>
        <path d="M86.0 184.0L78.0 184.2" stroke-width="12.9"/>
        <path d="M81.0 204.0Q65.8 204.3 51.2 208.0" stroke-width="12.4"/>
        <path d="M81.0 204.0L63.6 204.8" stroke-width="16.2"/>
        <path d="M130.7 90.0Q142.4 89.4 155.7 88.5" stroke-width="8.7"/>
        <path d="M130.7 90.0L143.5 90.0" stroke-width="11.8"/>
        <path d="M127.0 110.0Q138.4 110.7 149.4 115.0" stroke-width="9.2"/>
        <path d="M127.0 110.0L138.8 111.3" stroke-width="14.0"/>
        <path d="M124.1 129.0Q132.5 130.4 141.4 137.0" stroke-width="7.1"/>
        <path d="M124.1 129.0L134.3 132.0" stroke-width="11.8"/>
        <path d="M129.8 148.0Q137.1 149.5 144.4 154.0" stroke-width="7.1"/>
        <path d="M129.8 148.0L137.0 149.3" stroke-width="10.7"/>
        <path d="M135.0 164.0Q142.1 165.9 149.9 173.0" stroke-width="8.2"/>
        <path d="M135.0 164.0L143.9 166.3" stroke-width="11.8"/>
      </g>
    </g>
    <rect x="320" y="0" width="1" height="240" fill="#fdfdfd"/>
    </g>
  </svg>
  <div style="left:26px;top:460px;width:321px;height:1px;background:#ececec"></div>
  <div class="hd" style="left:23px;top:217px"></div>
  <div class="hd" style="left:183px;top:217px"></div>
  <div class="hd" style="left:344px;top:217px"></div>
  <div class="hd" style="left:23px;top:337px"></div>
  <div class="hd" style="left:344px;top:337px"></div>
  <div class="hd" style="left:23px;top:457px"></div>
  <div class="hd" style="left:183px;top:457px"></div>
  <div class="hd" style="left:344px;top:457px"></div>
  <div id="status"></div>
  <svg style="left:584px;top:700px" width="12" height="14" viewBox="0 0 12 14"><path d="M1 0.500v11l2.800-2.600 1.900 4.300 1.800-.8-1.900-4.200h3.900z" fill="#777"/></svg>
  <div class="st" style="left:607px;top:699px;font-size:13px">1101, 368</div>
  <svg style="left:762px;top:699px" width="15" height="15" viewBox="0 0 15 15"><rect x="0.500" y="0.500" width="14" height="14" fill="#f4f4f4" stroke="#777"/><path d="M2 12.500l3.500-5 2.500 3.300 1.800-1.800 3 3.500z" fill="#777"/><circle cx="10.300" cy="4.500" r="1.600" fill="#777"/></svg>
  <div class="st" style="left:781px;top:699px;font-size:13px">321 x 240</div>
  <div style="left:904px;top:699px;width:16px;height:16px;background:#e1e1e1;border:1px solid #adadad"></div>
  <div style="left:908px;top:706px;width:8px;height:2px;background:#333"></div>
  <div style="left:926px;top:704px;width:92px;height:5px;background:#e7eaea;border:1px solid #d6d6d6"></div>
  <div style="left:969px;top:702px;width:5px;height:10px;background:#0078d7"></div>
  <div style="left:1024px;top:699px;width:16px;height:16px;background:#e1e1e1;border:1px solid #adadad"></div>
  <div style="left:1028px;top:706px;width:8px;height:2px;background:#333"></div>
  <div style="left:1031px;top:703px;width:2px;height:8px;background:#333"></div>
  <div class="st" style="left:1058px;top:699px;font-size:12.500px;letter-spacing:-0.200px">100%</div>
  <div class="arrow" style="left:1099px;top:705px"></div>
  <div class="frame-l"></div><div class="frame-r"></div><div class="frame-b"></div>
</div>
</body>
</html>
